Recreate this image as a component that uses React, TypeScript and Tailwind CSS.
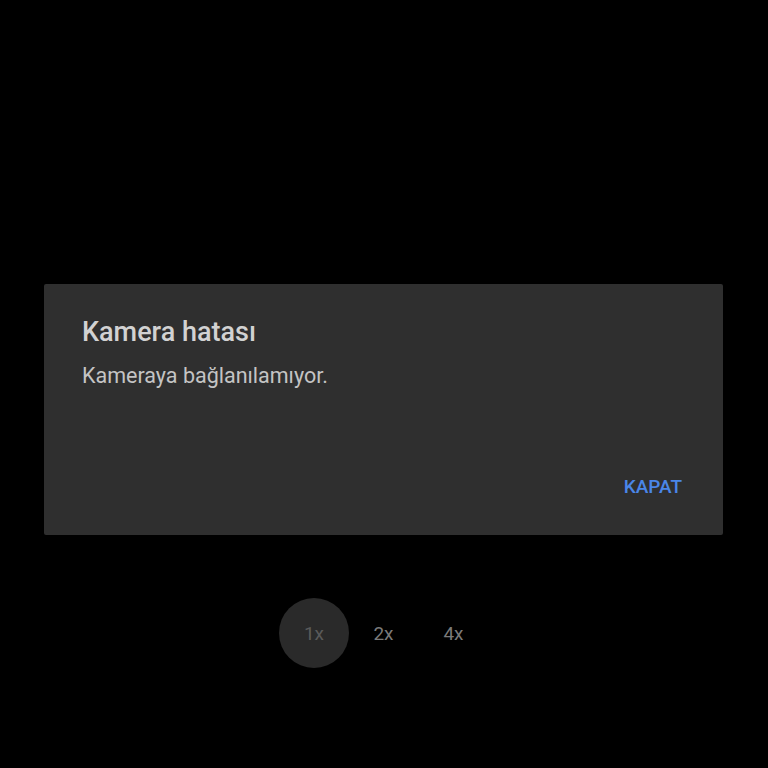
export default function App() {
  return (
    <div className="w-[768px] h-[768px] bg-black flex flex-col pt-[284px]" style={{ fontFamily: "Roboto, 'Liberation Sans', sans-serif" }}>
      <div className="ml-[44px] w-[679px] h-[251px] bg-[#2f2f2f] rounded-[2px] flex flex-col pl-[38px] pr-[41px]">
        <div className="mt-[32px] text-[27px] leading-[32px] font-medium text-[#d2d2d2]">Kamera hatası</div>
        <div className="mt-[15px] text-[21.5px] leading-[26px] text-[#c4c4c4]">Kameraya bağlanılamıyor.</div>
        <div className="mt-auto mb-[36px] flex justify-end">
          <span className="text-[19px] leading-[24px] font-medium text-[#4a86e8]">KAPAT</span>
        </div>
      </div>
      <div className="mt-[63px] flex justify-center">
        <div className="w-[70px] h-[70px] rounded-full bg-[#2a2a2a] flex items-center justify-center pt-[3px] text-[19px] text-[#5a5a5a]">1x</div>
        <div className="w-[70px] h-[70px] flex items-center justify-center pt-[3px] pr-[1px] text-[19px] text-[#7a7a7a]">2x</div>
        <div className="w-[70px] h-[70px] flex items-center justify-center pt-[3px] pr-[1px] text-[19px] text-[#7a7a7a]">4x</div>
      </div>
    </div>
  );
}
